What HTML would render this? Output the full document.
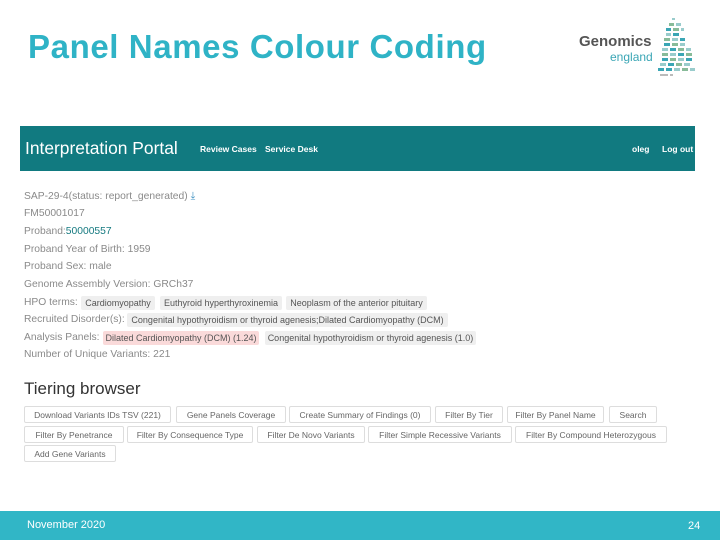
<!DOCTYPE html>
<html><head><style>
body{margin:0;width:720px;height:540px;position:relative;background:#fff;font-family:"Liberation Sans",sans-serif;overflow:hidden}
.a{position:absolute;white-space:nowrap}
.t{font-size:33px;color:#2fb3c6;left:28px;top:28px;font-weight:bold;letter-spacing:0.6px}
.bar{left:20px;top:126px;width:675px;height:45px;background:#117a80}
.ln{left:24px;font-size:10.3px;color:#8a8a8a}
.tag{position:absolute;height:14px;background:#efefef;border-radius:2px;font-size:9px;color:#555;line-height:14px;text-align:center}
.b{position:absolute;border:1px solid #ddd;border-radius:2px;font-size:8.5px;color:#666;line-height:16px;text-align:center;box-sizing:border-box;height:17px}
</style></head><body>
<div class="a t">Panel Names Colour Coding</div>
<div class="a" style="left:579px;top:33px;font-size:15px;font-weight:bold;color:#555">Genomics</div>
<div class="a" style="left:610px;top:50px;font-size:12px;color:#3aa6b5">england</div>
<svg class="a" style="left:658px;top:16px" width="40" height="64">
<g fill="#9cc">
<rect x="14" y="2" width="3" height="2"/>
<rect x="11" y="7" width="5" height="3" fill="#8b9"/><rect x="18" y="7" width="5" height="3"/>
<rect x="8" y="12" width="5" height="3" fill="#3aa6b5"/><rect x="15" y="12" width="6" height="3" fill="#8b9"/><rect x="23" y="12" width="3" height="3"/>
<rect x="8" y="17" width="5" height="3"/><rect x="15" y="17" width="6" height="3" fill="#3aa6b5"/>
<rect x="6" y="22" width="6" height="3" fill="#8b9"/><rect x="14" y="22" width="6" height="3"/><rect x="22" y="22" width="5" height="3" fill="#3aa6b5"/>
<rect x="6" y="27" width="6" height="3" fill="#3aa6b5"/><rect x="14" y="27" width="6" height="3" fill="#8b9"/><rect x="22" y="27" width="5" height="3"/>
<rect x="4" y="32" width="6" height="3"/><rect x="12" y="32" width="6" height="3" fill="#3aa6b5"/><rect x="20" y="32" width="6" height="3" fill="#8b9"/><rect x="28" y="32" width="5" height="3"/>
<rect x="4" y="37" width="6" height="3" fill="#8b9"/><rect x="12" y="37" width="6" height="3"/><rect x="20" y="37" width="6" height="3" fill="#3aa6b5"/><rect x="28" y="37" width="6" height="3" fill="#8b9"/>
<rect x="4" y="42" width="6" height="3" fill="#3aa6b5"/><rect x="12" y="42" width="6" height="3" fill="#8b9"/><rect x="20" y="42" width="6" height="3"/><rect x="28" y="42" width="6" height="3" fill="#3aa6b5"/>
<rect x="2" y="47" width="6" height="3"/><rect x="10" y="47" width="6" height="3" fill="#3aa6b5"/><rect x="18" y="47" width="6" height="3" fill="#8b9"/><rect x="26" y="47" width="6" height="3"/>
<rect x="0" y="52" width="6" height="3" fill="#3aa6b5"/><rect x="8" y="52" width="6" height="3" fill="#3aa6b5"/><rect x="16" y="52" width="6" height="3"/><rect x="24" y="52" width="6" height="3" fill="#8b9"/><rect x="32" y="52" width="5" height="3"/>
<rect x="2" y="58" width="8" height="2" fill="#bbb"/><rect x="12" y="58" width="3" height="2" fill="#bbb"/>
</g></svg>
<div class="a bar"></div>
<div class="a" style="left:25px;top:138px;font-size:17.4px;color:#fff">Interpretation Portal</div>
<div class="a" style="left:200px;top:144px;font-size:8.5px;color:#fff;font-weight:bold">Review Cases</div>
<div class="a" style="left:265px;top:144px;font-size:8.5px;color:#fff;font-weight:bold">Service Desk</div>
<div class="a" style="left:632px;top:144px;font-size:8.5px;color:#fff;font-weight:bold">oleg</div>
<div class="a" style="left:662px;top:144px;font-size:8.5px;color:#fff;font-weight:bold">Log out</div>
<div class="a ln" style="top:191px">SAP-29-4(status: report_generated) <span style="color:#3a8fc0">⤓</span></div>
<div class="a ln" style="top:208px">FM50001017</div>
<div class="a ln" style="top:226px">Proband:<span style="color:#167a80">50000557</span></div>
<div class="a ln" style="top:244px">Proband Year of Birth: 1959</div>
<div class="a ln" style="top:261px">Proband Sex: male</div>
<div class="a ln" style="top:279px">Genome Assembly Version: GRCh37</div>
<div class="a ln" style="top:297px">HPO terms:</div>
<div class="a ln" style="top:314px">Recruited Disorder(s):</div>
<div class="a ln" style="top:332px">Analysis Panels:</div>
<div class="a ln" style="top:349px">Number of Unique Variants: 221</div>
<div class="tag" style="left:81px;top:296px;width:74px">Cardiomyopathy</div>
<div class="tag" style="left:160px;top:296px;width:122px">Euthyroid hyperthyroxinemia</div>
<div class="tag" style="left:286px;top:296px;width:141px">Neoplasm of the anterior pituitary</div>
<div class="tag" style="left:127px;top:313px;width:321px">Congenital hypothyroidism or thyroid agenesis;Dilated Cardiomyopathy (DCM)</div>
<div class="tag" style="left:103px;top:331px;width:156px;background:#fadada">Dilated Cardiomyopathy (DCM) (1.24)</div>
<div class="tag" style="left:265px;top:331px;width:211px">Congenital hypothyroidism or thyroid agenesis (1.0)</div>
<div class="a" style="left:24px;top:379px;font-size:17px;color:#333">Tiering browser</div>
<div class="b" style="left:24px;top:406px;width:147px">Download Variants IDs TSV (221)</div>
<div class="b" style="left:176px;top:406px;width:110px">Gene Panels Coverage</div>
<div class="b" style="left:289px;top:406px;width:142px">Create Summary of Findings (0)</div>
<div class="b" style="left:435px;top:406px;width:68px">Filter By Tier</div>
<div class="b" style="left:507px;top:406px;width:97px">Filter By Panel Name</div>
<div class="b" style="left:609px;top:406px;width:48px">Search</div>
<div class="b" style="left:24px;top:426px;width:100px">Filter By Penetrance</div>
<div class="b" style="left:127px;top:426px;width:126px">Filter By Consequence Type</div>
<div class="b" style="left:257px;top:426px;width:108px">Filter De Novo Variants</div>
<div class="b" style="left:368px;top:426px;width:144px">Filter Simple Recessive Variants</div>
<div class="b" style="left:515px;top:426px;width:152px">Filter By Compound Heterozygous</div>
<div class="b" style="left:24px;top:445px;width:92px">Add Gene Variants</div>
<div class="a" style="left:0;top:511px;width:720px;height:29px;background:#31b6c6"></div>
<div class="a" style="left:27px;top:519px;font-size:11px;color:#fff">November 2020</div>
<div class="a" style="left:688px;top:520px;font-size:11px;color:#fff">24</div>
</body></html>
